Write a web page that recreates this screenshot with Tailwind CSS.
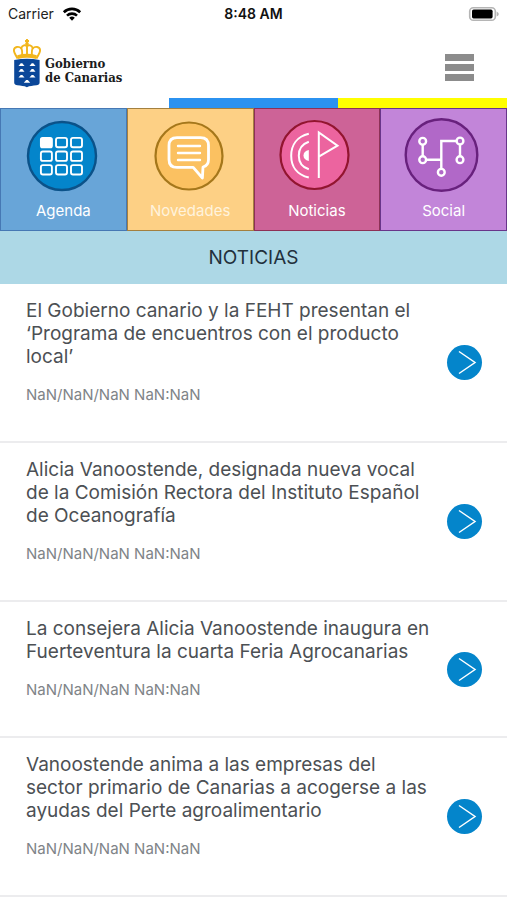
<!DOCTYPE html>
<html lang="es">
<head>
<meta charset="utf-8">
<meta name="viewport" content="width=device-width, initial-scale=1">
<title>Gobierno de Canarias - Noticias</title>
<script src="https://cdn.jsdelivr.net/npm/@tailwindcss/browser@4"></script>
</head>
<body class="min-h-screen bg-white font-['Inter','Liberation_Sans',sans-serif] text-[#4c5054]">
<div class="grid h-7 grid-cols-3 items-center px-2 text-black">
  <div class="flex items-center gap-2 text-sm text-[#222]">
    <span>Carrier</span>
    <svg class="h-4 w-5" viewBox="0 0 20 16" fill="none" stroke="#000" stroke-width="2.6" aria-hidden="true">
      <path d="M1.8 6.2a11.8 11.8 0 0 1 16.4 0"/><path d="M5 9.6a7.2 7.2 0 0 1 10 0"/><path d="M10 14.8l-2.8-3a4 4 0 0 1 5.6 0z" fill="#000" stroke="none"/>
    </svg>
  </div>
  <div class="text-center text-sm font-semibold whitespace-nowrap text-[#111]">8:48 AM</div>
  <svg class="h-4 w-8 justify-self-end" viewBox="0 0 32 16" aria-hidden="true">
    <rect x="2.7" y="1.7" width="25.600" height="12.600" rx="3.600" fill="#fff" stroke="#b5b5b5" stroke-width="1.600"/>
    <rect x="5" y="3.600" width="20.600" height="8.800" rx="1.600" fill="#000"/>
    <path d="M29.600 5.400q2.200 1 2.200 2.600t-2.200 2.600z" fill="#b5b5b5"/>
  </svg>
</div>
<header class="flex h-[70px] items-center justify-between pr-[33px] pl-[13px]">
  <a href="#" class="flex items-center gap-1 text-[#1c1c1c]">
    <svg class="h-[50px] w-7" viewBox="0 0 28 50" aria-hidden="true">
      <g fill="none" stroke="#f2b61c" stroke-width="1.9">
        <path d="M4.6 20.5C3 17 .8 15.5.9 12.2 1.1 8.4 6.2 8 8.4 10.6c1.200 1.600.8 5 .6 8"/>
        <path d="M23.4 20.5c1.600-3.500 3.800-5 3.700-8.300-.2-3.800-5.300-4.200-7.500-1.600-1.200 1.600-.8 5-.6 8"/>
        <path d="M8.2 10.4C9.2 7 12.4 6.6 14 8.200c1.600-1.600 4.800-1.200 5.800 2.200M14 7v11"/>
        <path d="M14 1v6M12 3h4"/>
      </g>
      <circle cx="14" cy="5.800" r="1.800" fill="#f2b61c"/>
      <path d="M4.200 17.200Q14 14.400 23.800 17.200l-.6 3.800Q14 18.600 4.800 21z" fill="#f2b61c"/>
      <path d="M1.200 22Q14 19.600 26.600 22v22.600c0 2-1.400 2.400-3.200 2.700-3.600.6-6.600.5-9.500 1.900-2.900-1.400-5.900-1.300-9.500-1.900-1.800-.3-3.200-.7-3.200-2.700z" fill="#0b4799"/>
      <g fill="#fff">
        <path d="M5.500 28l2.200-2.700h1.600l2.200 2.700z"/><path d="M16.500 28l2.200-2.700h1.600l2.200 2.700z"/>
        <path d="M5.500 33.800l2.200-2.700h1.600l2.200 2.700z"/><path d="M16.500 33.800l2.200-2.700h1.600l2.200 2.700z"/>
        <path d="M5.500 39.600l2.200-2.700h1.600l2.200 2.700z"/><path d="M16.500 39.600l2.200-2.700h1.600l2.200 2.700z"/>
        <path d="M10.800 44.800l2.400-2.800h1.600l2.400 2.800z"/>
      </g>
    </svg>
    <span class="pt-4 font-['DejaVu_Serif_Condensed','DejaVu_Serif',serif] text-[13px] leading-[14px] font-bold">Gobierno<br>de Canarias</span>
  </a>
  <button type="button" aria-label="Menú" class="mt-2 flex w-[29px] flex-col gap-[3px]">
    <span class="h-[7px] bg-[#8c8c8c]"></span>
    <span class="h-[7px] bg-[#8c8c8c]"></span>
    <span class="h-[7px] bg-[#8c8c8c]"></span>
  </button>
</header>
<div class="grid h-[10px] grid-cols-3"><span class="bg-white"></span><span class="bg-[#2b92f0]"></span><span class="bg-[#ffff00]"></span></div>
<nav class="grid h-[123px] grid-cols-4 text-[15px] leading-5 text-white">
  <a href="#" class="flex flex-col items-center gap-2 border border-[#4678b4] bg-[#68a5d8] pt-2">
    <svg class="size-[76px] overflow-visible" viewBox="0 0 76 76" fill="none" aria-hidden="true">
      <circle cx="37" cy="39" r="34" fill="#0485cb" stroke="#0b5289" stroke-width="2.400"/>
      <g stroke="#fff" stroke-width="1.900">
        <rect x="15.900" y="20.900" width="11" height="9.400" rx="1.600" fill="#fff"/><rect x="31" y="20.900" width="11" height="9.400" rx="2"/><rect x="46" y="20.900" width="11" height="9.400" rx="2"/>
        <rect x="15.900" y="34.500" width="11" height="9.400" rx="2"/><rect x="31" y="34.500" width="11" height="9.400" rx="2"/><rect x="46" y="34.500" width="11" height="9.400" rx="2"/>
        <rect x="15.900" y="48.100" width="11" height="9.400" rx="2"/><rect x="31" y="48.100" width="11" height="9.400" rx="2"/><rect x="46" y="48.100" width="11" height="9.400" rx="2"/>
      </g>
    </svg>
    Agenda
  </a>
  <a href="#" class="flex flex-col items-center gap-2 border border-[#a3803f] bg-[#fdd085] pt-2 text-[#fff3dd]">
    <svg class="size-[76px] overflow-visible" viewBox="0 0 76 76" fill="none" aria-hidden="true">
      <circle cx="37" cy="39" r="33.500" fill="#fbc161" stroke="#a5771b" stroke-width="2.200"/>
      <g stroke="#fff" stroke-width="2.800" stroke-linejoin="round" stroke-linecap="round">
        <path d="M25 20.600H48.500q8 0 8 8V42.500q0 6-5.500 7.500l-.6 11-9.200-10.600H25q-8 0-8-8V28.600q0-8 8-8z"/>
        <path d="M26 29H48M26 36H48M26 43H48" stroke-width="2.400"/>
      </g>
    </svg>
    Novedades
  </a>
  <a href="#" class="flex flex-col items-center gap-2 border border-[#8d3156] bg-[#cd6397] pt-2">
    <svg class="size-[76px] overflow-visible" viewBox="0 0 76 76" fill="none" aria-hidden="true">
      <circle cx="35.500" cy="38" r="34" fill="#ec649f" stroke="#92152f" stroke-width="2.200"/>
      <g stroke="#fff" stroke-width="2">
        <path d="M39.800 61V15.500L58.500 28.700 39.800 39.700"/>
        <path d="M29.800 16.700C18 19.500 12.200 28 12.200 38.700S18 57.800 29.800 60.500"/>
        <path d="M29.800 24.700C23 27 19.800 32 19.800 38.700S23 50 29.800 52.300"/>
      </g>
      <path d="M29.800 33c-3.500.8-5.300 2.600-5.300 5.500s1.800 4.700 5.300 5.500z" fill="#fff"/>
    </svg>
    Noticias
  </a>
  <a href="#" class="flex flex-col items-center gap-2 border border-[#68358a] bg-[#c285d9] pt-2">
    <svg class="size-[76px] overflow-visible" viewBox="0 0 76 76" fill="none" aria-hidden="true">
      <circle cx="35.500" cy="38" r="35.800" fill="#b168c8" stroke="#68217d" stroke-width="2.400"/>
      <g stroke="#fff" stroke-width="2.400">
        <path d="M16.700 24.300V42.700H35.300M54 42.700V24H35.300V55.300"/>
        <g fill="#b168c8"><circle cx="16.700" cy="24.300" r="3.400"/><circle cx="16.700" cy="42.700" r="3.400"/><circle cx="35.300" cy="55.300" r="3.400"/><circle cx="54" cy="24" r="3.400"/><circle cx="54" cy="42.700" r="3.400"/></g>
      </g>
    </svg>
    Social
  </a>
</nav>
<main>
  <h1 class="bg-[#add8e6] py-[14px] text-center text-[19px] leading-[25px] text-[#22303c]">NOTICIAS</h1>
  <ul>
    <li class="flex items-center justify-between gap-4 border-b-2 border-[#ececee] pr-[25px] pl-[26px]">
      <div class="pt-[15px] pb-[35px]">
        <h2 class="text-[19px] leading-[23px]">El Gobierno canario y la FEHT presentan el ‘Programa de encuentros con el producto local’</h2>
        <p class="mt-4 text-[15px] leading-[22px] text-[#808488]">NaN/NaN/NaN NaN:NaN</p>
      </div>
      <button type="button" aria-label="Abrir noticia" class="size-[35px] shrink-0 rounded-full bg-[#0485cb]"><svg class="size-full" viewBox="0 0 35 35" fill="none" stroke="#fff" stroke-width="1.500"><path d="M12 6.500L28 17.500 12 28.500"/></svg></button>
    </li>
    <li class="flex items-center justify-between gap-4 border-b-2 border-[#ececee] pr-[25px] pl-[26px]">
      <div class="pt-[15px] pb-[35px]">
        <h2 class="text-[19px] leading-[23px]">Alicia Vanoostende, designada nueva vocal de la Comisión Rectora del Instituto Español de Oceanografía</h2>
        <p class="mt-4 text-[15px] leading-[22px] text-[#808488]">NaN/NaN/NaN NaN:NaN</p>
      </div>
      <button type="button" aria-label="Abrir noticia" class="size-[35px] shrink-0 rounded-full bg-[#0485cb]"><svg class="size-full" viewBox="0 0 35 35" fill="none" stroke="#fff" stroke-width="1.500"><path d="M12 6.500L28 17.500 12 28.500"/></svg></button>
    </li>
    <li class="flex items-center justify-between gap-4 border-b-2 border-[#ececee] pr-[25px] pl-[26px]">
      <div class="pt-[15px] pb-[35px]">
        <h2 class="text-[19px] leading-[23px]">La consejera Alicia Vanoostende inaugura en Fuerteventura la cuarta Feria Agrocanarias</h2>
        <p class="mt-4 text-[15px] leading-[22px] text-[#808488]">NaN/NaN/NaN NaN:NaN</p>
      </div>
      <button type="button" aria-label="Abrir noticia" class="size-[35px] shrink-0 rounded-full bg-[#0485cb]"><svg class="size-full" viewBox="0 0 35 35" fill="none" stroke="#fff" stroke-width="1.500"><path d="M12 6.500L28 17.500 12 28.500"/></svg></button>
    </li>
    <li class="flex items-center justify-between gap-4 border-b-2 border-[#ececee] pr-[25px] pl-[26px]">
      <div class="pt-[15px] pb-[35px]">
        <h2 class="text-[19px] leading-[23px]">Vanoostende anima a las empresas del sector primario de Canarias a acogerse a las ayudas del Perte agroalimentario</h2>
        <p class="mt-4 text-[15px] leading-[22px] text-[#808488]">NaN/NaN/NaN NaN:NaN</p>
      </div>
      <button type="button" aria-label="Abrir noticia" class="size-[35px] shrink-0 rounded-full bg-[#0485cb]"><svg class="size-full" viewBox="0 0 35 35" fill="none" stroke="#fff" stroke-width="1.500"><path d="M12 6.500L28 17.500 12 28.500"/></svg></button>
    </li>
  </ul>
</main>
</body>
</html>
